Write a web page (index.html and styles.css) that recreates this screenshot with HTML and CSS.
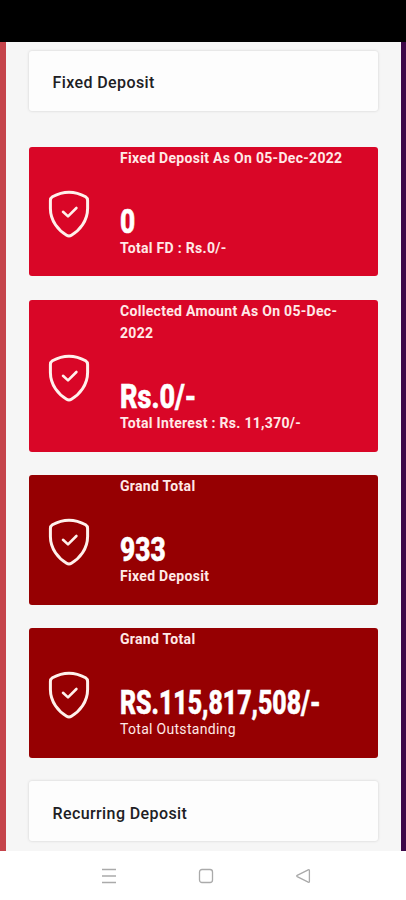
FILE: index.html
```
<!DOCTYPE html>
<html lang="en">
<head>
<meta charset="utf-8">
<title>Deposits</title>
<link rel="stylesheet" href="styles.css">
</head>
<body>
<svg class="defs" aria-hidden="true">
  <symbol id="shield" viewBox="0 0 42 48">
    <path d="M21 2.2C27 2.2 33 4.2 37.6 6.7Q39.6 7.9 39.6 10.5V18.5C39.6 31 31.5 40.5 23.4 45.2Q21 46.6 18.6 45.2C10.5 40.5 2.4 31 2.4 18.5V10.5Q2.4 7.9 4.4 6.7C9 4.2 15 2.2 21 2.2Z" stroke-width="3"/>
    <path d="M15 21.8L20 26.4L28.4 18" stroke-width="2.6"/>
  </symbol>
</svg>
<div class="status"></div>
<div class="shell">
  <main class="page">
    <section class="heading">Fixed Deposit</section>
    <section class="card">
      <svg class="icon"><use href="#shield"/></svg>
      <div class="info">
        <div class="label">Fixed Deposit As On 05-Dec-2022</div>
        <div class="value">0</div>
        <div class="label">Total FD : Rs.0/-</div>
      </div>
    </section>
    <section class="card tall">
      <svg class="icon"><use href="#shield"/></svg>
      <div class="info">
        <div class="label">Collected Amount As On 05-Dec-<br>2022</div>
        <div class="value rupees">Rs.0/-</div>
        <div class="label">Total Interest : Rs. 11,370/-</div>
      </div>
    </section>
    <section class="card dark">
      <svg class="icon"><use href="#shield"/></svg>
      <div class="info">
        <div class="label">Grand Total</div>
        <div class="value">933</div>
        <div class="label">Fixed Deposit</div>
      </div>
    </section>
    <section class="card dark">
      <svg class="icon"><use href="#shield"/></svg>
      <div class="info">
        <div class="label">Grand Total</div>
        <div class="value total">RS.115,817,508/-</div>
        <div class="label light">Total Outstanding</div>
      </div>
    </section>
    <section class="heading">Recurring Deposit</section>
  </main>
</div>
<nav class="nav">
  <svg viewBox="0 0 16 16"><path d="M1 1.5H15M1 8H15M1 14.5H15"/></svg>
  <svg viewBox="0 0 16 16"><rect x="1.5" y="1.5" width="13" height="13" rx="2.5"/></svg>
  <svg viewBox="0 0 16 16"><path d="M13.2 1.8L2.2 7.4Q1.2 8 2.2 8.6L13.2 14.2Q14.4 14.6 14.4 13.4V2.6Q14.4 1.4 13.2 1.8Z"/></svg>
</nav>
</body>
</html>
```
FILE: styles.css
```
* { box-sizing: border-box; }
body {
  margin: 0;
  height: 900px;
  display: flex;
  flex-direction: column;
  overflow: hidden;
  background: #fff;
  font-family: Roboto, "Liberation Sans", sans-serif;
}
.defs { display: none; }
.status { height: 42px; flex: none; background: #000; }
.shell {
  height: 809px;
  flex: none;
  padding: 0 5px 0 6px;
  background: linear-gradient(90deg, #c5444b 0 50%, #3d0748 50%);
}
.page {
  height: 100%;
  padding: 9px 23px 0;
  background: #f6f6f6;
  display: flex;
  flex-direction: column;
  gap: 23.4px;
}
.heading {
  height: 60px;
  flex: none;
  padding: 2px 23px 0 23.5px;
  display: flex;
  align-items: center;
  background: #fdfdfd;
  border-radius: 3px;
  box-shadow: 0 0 3px rgba(0, 0, 0, .16);
  color: #202024;
  font-size: 16px;
  font-weight: 500;
  letter-spacing: .4px;
}
.heading:first-child { margin-bottom: 12.6px; }
.heading:last-child { padding-top: 4px; }
.card {
  height: 129.5px;
  flex: none;
  display: flex;
  border-radius: 3px;
  background: #d90627;
  color: #ffe9e7;
}
.tall { height: 152px; }
.dark { background: #960002; }
.icon {
  width: 42px;
  height: 48px;
  margin: 4px 30px 0 19px;
  align-self: center;
  flex: none;
  fill: none;
  stroke: #fff1ec;
  stroke-linecap: round;
  stroke-linejoin: round;
}
.info { flex: 1; }
.label {
  font-size: 14px;
  line-height: 22px;
  font-weight: 700;
  letter-spacing: .3px;
  white-space: nowrap;
}
.light { font-weight: 400; }
.value {
  width: max-content;
  margin-top: 37px;
  height: 31px;
  line-height: 31px;
  color: #fff;
  font-size: 33px;
  font-weight: 800;
  -webkit-text-stroke: .6px #fff;
  white-space: nowrap;
  transform: scaleX(.8);
  transform-origin: left;
}
.rupees { transform: scaleX(.82); }
.total { transform: scaleX(.755); }
.nav {
  flex: 1;
  display: flex;
  justify-content: center;
  gap: 81px;
  padding: 17px 0 0 5px;
}
.nav svg {
  width: 16px;
  height: 16px;
  fill: none;
  stroke: #aaa;
  stroke-width: 1.3;
}
```
